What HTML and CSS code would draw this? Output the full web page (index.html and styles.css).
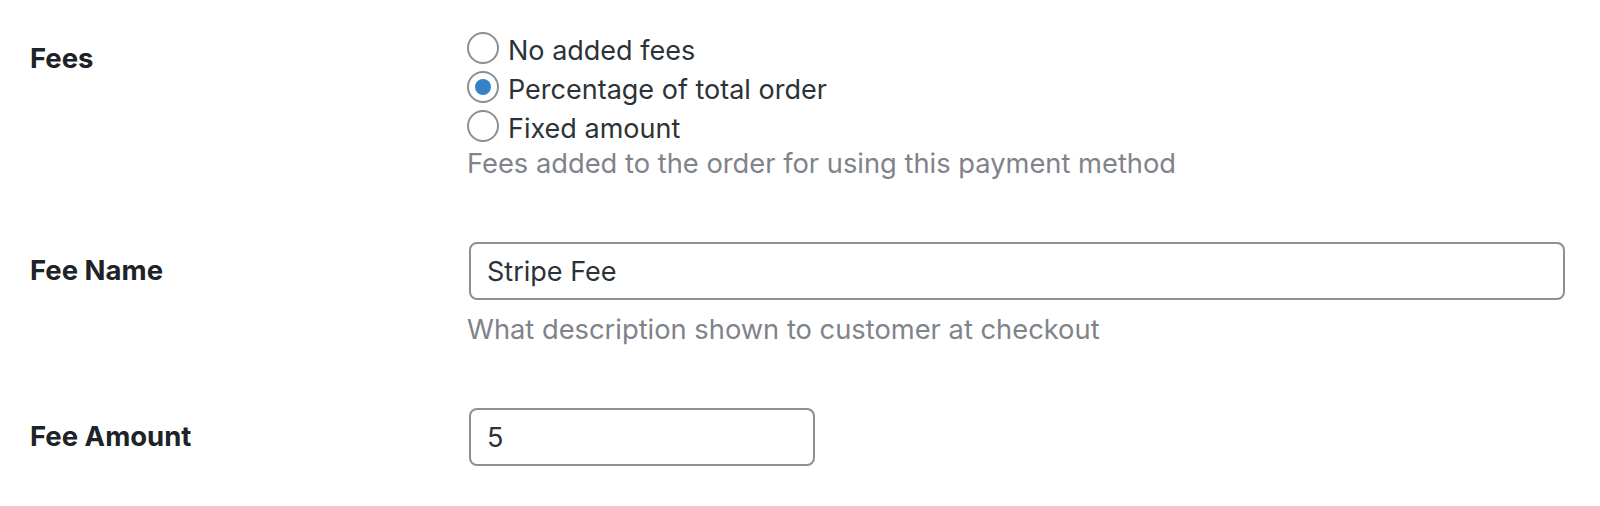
FILE: index.html
```html
<!DOCTYPE html>
<html lang="en">
<head>
    <meta charset="UTF-8">
    <meta name="viewport" content="width=device-width, initial-scale=1.0">
    <title>Payment Fees</title>
    <link rel="stylesheet" href="styles.css">
</head>
<body>
    <div class="form-table">
        <div class="form-row">
            <div class="field-label">Fees</div>
            <div class="field">
                <div class="radio-list">
                    <label class="radio"><input type="radio" name="fee_type" value="none"> No added fees</label>
                    <label class="radio"><input type="radio" name="fee_type" value="percent" checked> Percentage of total order</label>
                    <label class="radio"><input type="radio" name="fee_type" value="fixed"> Fixed amount</label>
                </div>
                <p class="description">Fees added to the order for using this payment method</p>
            </div>
        </div>

        <div class="form-row">
            <label class="field-label" for="feeName">Fee Name</label>
            <div class="field">
                <input type="text" id="feeName" class="text-input wide" value="Stripe Fee">
                <p class="description spaced">What description shown to customer at checkout</p>
            </div>
        </div>

        <div class="form-row">
            <label class="field-label" for="feeAmount">Fee Amount</label>
            <div class="field">
                <input type="text" id="feeAmount" class="text-input short" value="5">
            </div>
        </div>
    </div>
</body>
</html>
```

FILE: styles.css
```css
body {
    margin: 0;
    padding: 0 30px;
    font-family: 'Inter', 'Liberation Sans', sans-serif;
    background: #fff;
    color: #2c3338;
}

.form-row {
    display: grid;
    grid-template-columns: 437px 1fr;
}

.field-label {
    padding-top: 40px;
    font-size: 27.5px;
    font-weight: 700;
    line-height: 36px;
    color: #1d2327;
}

.field {
    padding: 30px 0 32px;
}

/* Radios */
.radio-list {
    display: flex;
    flex-direction: column;
    margin-top: 1px;
}

.radio {
    display: flex;
    align-items: center;
    gap: 9px;
    height: 39px;
    font-size: 27px;
    color: #2c3338;
}

.radio input {
    appearance: none;
    -webkit-appearance: none;
    width: 32px;
    height: 32px;
    margin: 0 0 5px;
    border: 2px solid #8c8f94;
    border-radius: 50%;
    background: #fff;
    display: flex;
    justify-content: center;
    align-items: center;
}

.radio input:checked::before {
    content: '';
    width: 16px;
    height: 16px;
    border-radius: 50%;
    background: #3582c4;
}

.description {
    margin: 0;
    font-size: 27.3px;
    line-height: 32px;
    color: #80838a;
}

.description.spaced {
    margin-top: 14px;
}

/* Text inputs */
.text-input {
    box-sizing: border-box;
    display: block;
    height: 58px;
    margin: 0 0 0 2px;
    padding: 0 16px;
    font-family: inherit;
    font-size: 27px;
    color: #2c3338;
    background: #fff;
    border: 2px solid #8c8f94;
    border-radius: 8px;
}

.text-input.wide {
    width: 1096px;
}

.text-input.short {
    width: 346px;
}
```
